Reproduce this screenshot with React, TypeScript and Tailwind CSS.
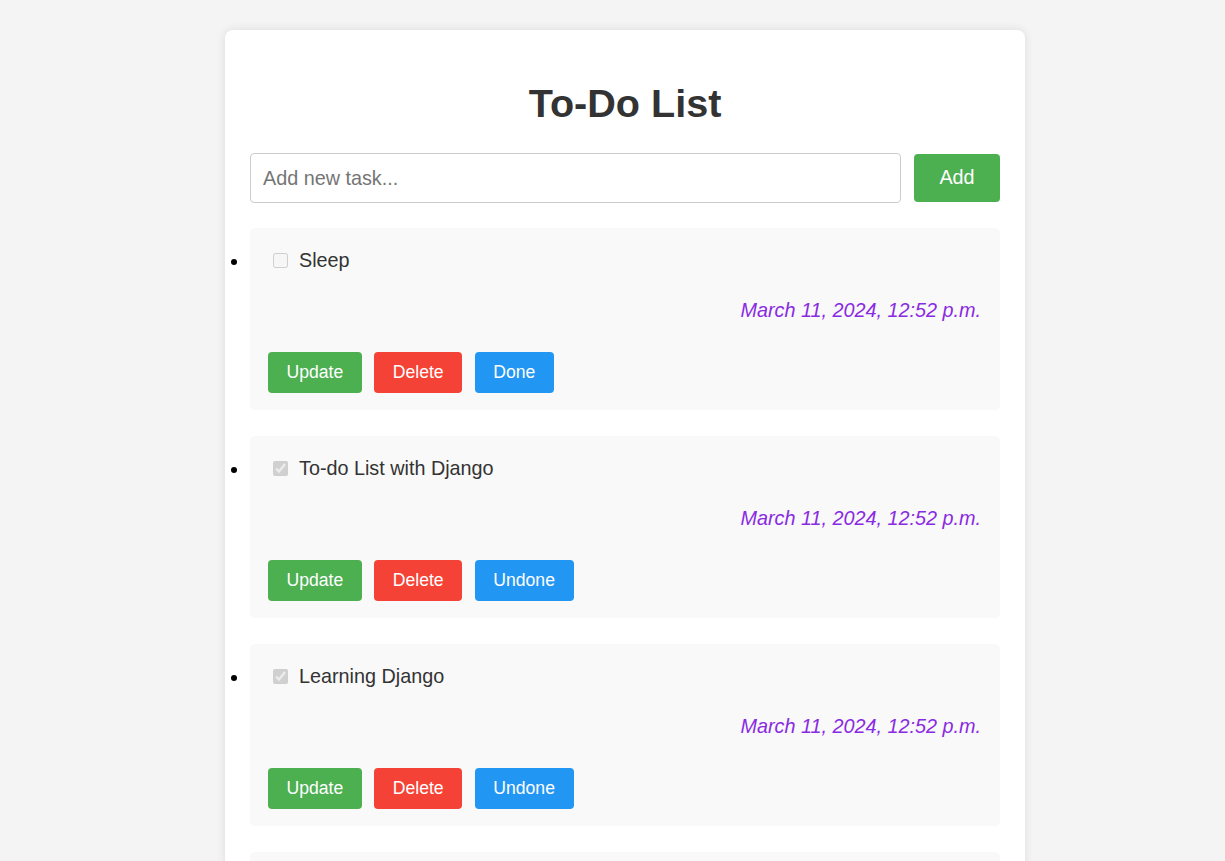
import React from 'react';

type Task = { id: number; title: string; done: boolean; created: string };

const tasks: Task[] = [
  { id: 1, title: 'Sleep', done: false, created: 'March 11, 2024, 12:52 p.m.' },
  { id: 2, title: 'To-do List with Django', done: true, created: 'March 11, 2024, 12:52 p.m.' },
  { id: 3, title: 'Learning Django', done: true, created: 'March 11, 2024, 12:52 p.m.' },
  { id: 4, title: 'Read a book', done: false, created: 'March 11, 2024, 12:52 p.m.' },
];

const TaskItem: React.FC<{ task: Task }> = ({ task }) => (
  <li className="mb-[26px] rounded-[5px] bg-[#f9f9f9] pl-[18px] pr-[19px] pt-[21px] pb-[17px] text-[20px] leading-[23px] marker:text-black">
    <div className="flex h-[23px] items-center">
      <input
        type="checkbox"
        checked={task.done}
        disabled
        readOnly
        className="ml-[5px] h-[15px] w-[15px]"
      />
      <span className="ml-[11px] text-[19.8px] text-[#333]">{task.title}</span>
    </div>
    <p className="mt-[27px] h-[23px] text-right text-[19.8px] italic leading-[23px] text-[#8a2be2]">
      {task.created}
    </p>
    <div className="mt-[30px] flex gap-[12.5px]">
      <button className="h-[41px] rounded-[4px] bg-[#4caf50] px-[18.5px] text-[17.6px] leading-normal text-white">
        Update
      </button>
      <button className="h-[41px] rounded-[4px] bg-[#f44336] px-[18.5px] text-[17.6px] leading-normal text-white">
        Delete
      </button>
      <button className="h-[41px] rounded-[4px] bg-[#2196f3] px-[18.7px] text-[17.6px] leading-normal text-white">
        {task.done ? 'Undone' : 'Done'}
      </button>
    </div>
  </li>
);

export default function App() {
  return (
    <div className="min-h-screen bg-[#f4f4f4] pt-[30px] font-['Liberation_Sans',Arial,sans-serif] text-[#333]">
      <div className="ml-[225px] w-[800px] rounded-[8px] bg-white px-[25px] pt-[50px] pb-[25px] shadow-[0_0_10px_rgba(0,0,0,0.1)]">
        <h1 className="text-center text-[39.6px] font-bold leading-[46px] text-[#333]">To-Do List</h1>
        <form className="mt-[27px] flex items-center gap-[13px]" onSubmit={(e) => e.preventDefault()}>
          <input
            type="text"
            placeholder="Add new task..."
            className="h-[50px] flex-1 rounded-[4px] border border-[#ccc] px-[12px] text-[19.8px] text-[#333] placeholder:text-[#757575] outline-none"
          />
          <button className="h-[48px] w-[86px] rounded-[4px] bg-[#4caf50] text-[19.8px] text-white">
            Add
          </button>
        </form>
        <ul className="mt-[25px] list-disc pl-0">
          {tasks.map((t) => (
            <TaskItem key={t.id} task={t} />
          ))}
        </ul>
      </div>
    </div>
  );
}
